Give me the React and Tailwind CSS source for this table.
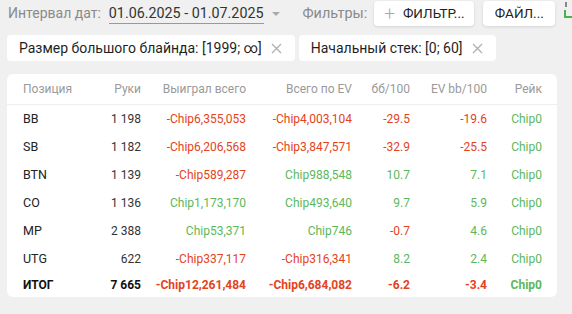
import React from 'react'

const RED = 'text-[#e4431c]'
const GREEN = 'text-[#5cb85c]'

const rows = [
  { pos: 'BB', hands: '1 198', won: '-Chip6,355,053', ev: '-Chip4,003,104', bb: '-29.5', evbb: '-19.6' },
  { pos: 'SB', hands: '1 182', won: '-Chip6,206,568', ev: '-Chip3,847,571', bb: '-32.9', evbb: '-25.5' },
  { pos: 'BTN', hands: '1 139', won: '-Chip589,287', ev: 'Chip988,548', bb: '10.7', evbb: '7.1' },
  { pos: 'CO', hands: '1 136', won: 'Chip1,173,170', ev: 'Chip493,640', bb: '9.7', evbb: '5.9' },
  { pos: 'MP', hands: '2 388', won: 'Chip53,371', ev: 'Chip746', bb: '-0.7', evbb: '4.6' },
  { pos: 'UTG', hands: '622', won: '-Chip337,117', ev: '-Chip316,341', bb: '8.2', evbb: '2.4' },
]

const tone = (v) => (v.startsWith('-') ? RED : GREEN)

const cols = 'grid grid-cols-[70px_48px_105px_106px_58px_77px_55px] pl-[16px] pr-[15px]'

function Chip({ children }) {
  return (
    <div className="flex items-center shrink-0 whitespace-nowrap h-[26px] bg-white rounded pl-[12px] pr-[13px] text-[14px] text-[#1f1f1f]">
      <span>{children}</span>
      <svg width="11" height="11" viewBox="0 0 11 11" className="ml-[9px]">
        <path d="M1 1 L10 10 M10 1 L1 10" stroke="#b0b0b0" strokeWidth="1.3" />
      </svg>
    </div>
  )
}

export default function App() {
  return (
    <div className="w-[572px] h-[314px] bg-[#f0f0f0] overflow-hidden font-['Roboto',sans-serif]">
      <div className="flex items-center h-[27px] pl-[8px] whitespace-nowrap">
        <span className="shrink-0 text-[14px] text-[#8a8a8a]">Интервал дат:</span>
        <span className="shrink-0 ml-[8px] text-[14.3px] text-[#333] border-b border-[#999] leading-[19px]">01.06.2025 - 01.07.2025</span>
        <span className="shrink-0 ml-[8px] w-0 h-0 border-l-[4px] border-r-[4px] border-t-[4px] border-l-transparent border-r-transparent border-t-[#aaa]"></span>
        <span className="shrink-0 ml-[23px] text-[14.4px] text-[#8a8a8a]">Фильтры:</span>
        <div className="shrink-0 ml-[7px] flex items-center h-[25px] w-[100px] bg-white rounded shadow-[0_1px_3px_rgba(0,0,0,0.12)] pl-[10px] text-[13.5px] text-[#222]">
          <span className="text-[#aaa] text-[19px] font-light leading-none mr-[8px]">+</span>
          ФИЛЬТР...
        </div>
        <div className="shrink-0 ml-[9px] flex items-center justify-center h-[25px] w-[72px] bg-white rounded shadow-[0_1px_3px_rgba(0,0,0,0.12)] text-[13.5px] text-[#222]">
          ФАЙЛ...
        </div>
        <svg width="10" height="20" viewBox="0 0 10 20" className="shrink-0 ml-[8px] self-start mt-[2px]">
          <rect x="2" y="0" width="2" height="5" fill="#888" />
          <path d="M2 8 V15 H9" stroke="#4caf50" strokeWidth="2" fill="none" />
        </svg>
      </div>
      <div className="flex gap-[4px] pl-[7px] mt-[8px]">
        <Chip>Размер большого блайнда: [1999; ∞]</Chip>
        <Chip>Начальный стек: [0; 60]</Chip>
      </div>
      <div className="ml-[7px] mt-[13px] w-[550px] bg-white rounded-md pb-[1px] text-[12px]">
        <div className={`${cols} h-[31px] items-center border-b border-[#eee] text-[#9a9a9a]`}>
          <div>Позиция</div>
          <div className="text-right">Руки</div>
          <div className="text-right">Выиграл всего</div>
          <div className="text-right">Всего по EV</div>
          <div className="text-right">бб/100</div>
          <div className="text-right">EV bb/100</div>
          <div className="text-right">Рейк</div>
        </div>
        {rows.map((r) => (
          <div key={r.pos} className={`${cols} h-[28px] items-center`}>
            <div className="text-[#222] text-[12.5px]">{r.pos}</div>
            <div className="text-right text-[#333]">{r.hands}</div>
            <div className={`text-right ${tone(r.won)}`}>{r.won}</div>
            <div className={`text-right ${tone(r.ev)}`}>{r.ev}</div>
            <div className={`text-right ${tone(r.bb)}`}>{r.bb}</div>
            <div className={`text-right ${tone(r.evbb)}`}>{r.evbb}</div>
            <div className={`text-right ${GREEN}`}>Chip0</div>
          </div>
        ))}
        <div className={`${cols} h-[23px] items-center font-bold`}>
          <div className="text-[#111]">ИТОГ</div>
          <div className="text-right text-[#111]">7 665</div>
          <div className={`text-right ${RED}`}>-Chip12,261,484</div>
          <div className={`text-right ${RED}`}>-Chip6,684,082</div>
          <div className={`text-right ${RED}`}>-6.2</div>
          <div className={`text-right ${RED}`}>-3.4</div>
          <div className={`text-right ${GREEN}`}>Chip0</div>
        </div>
      </div>
    </div>
  )
}
